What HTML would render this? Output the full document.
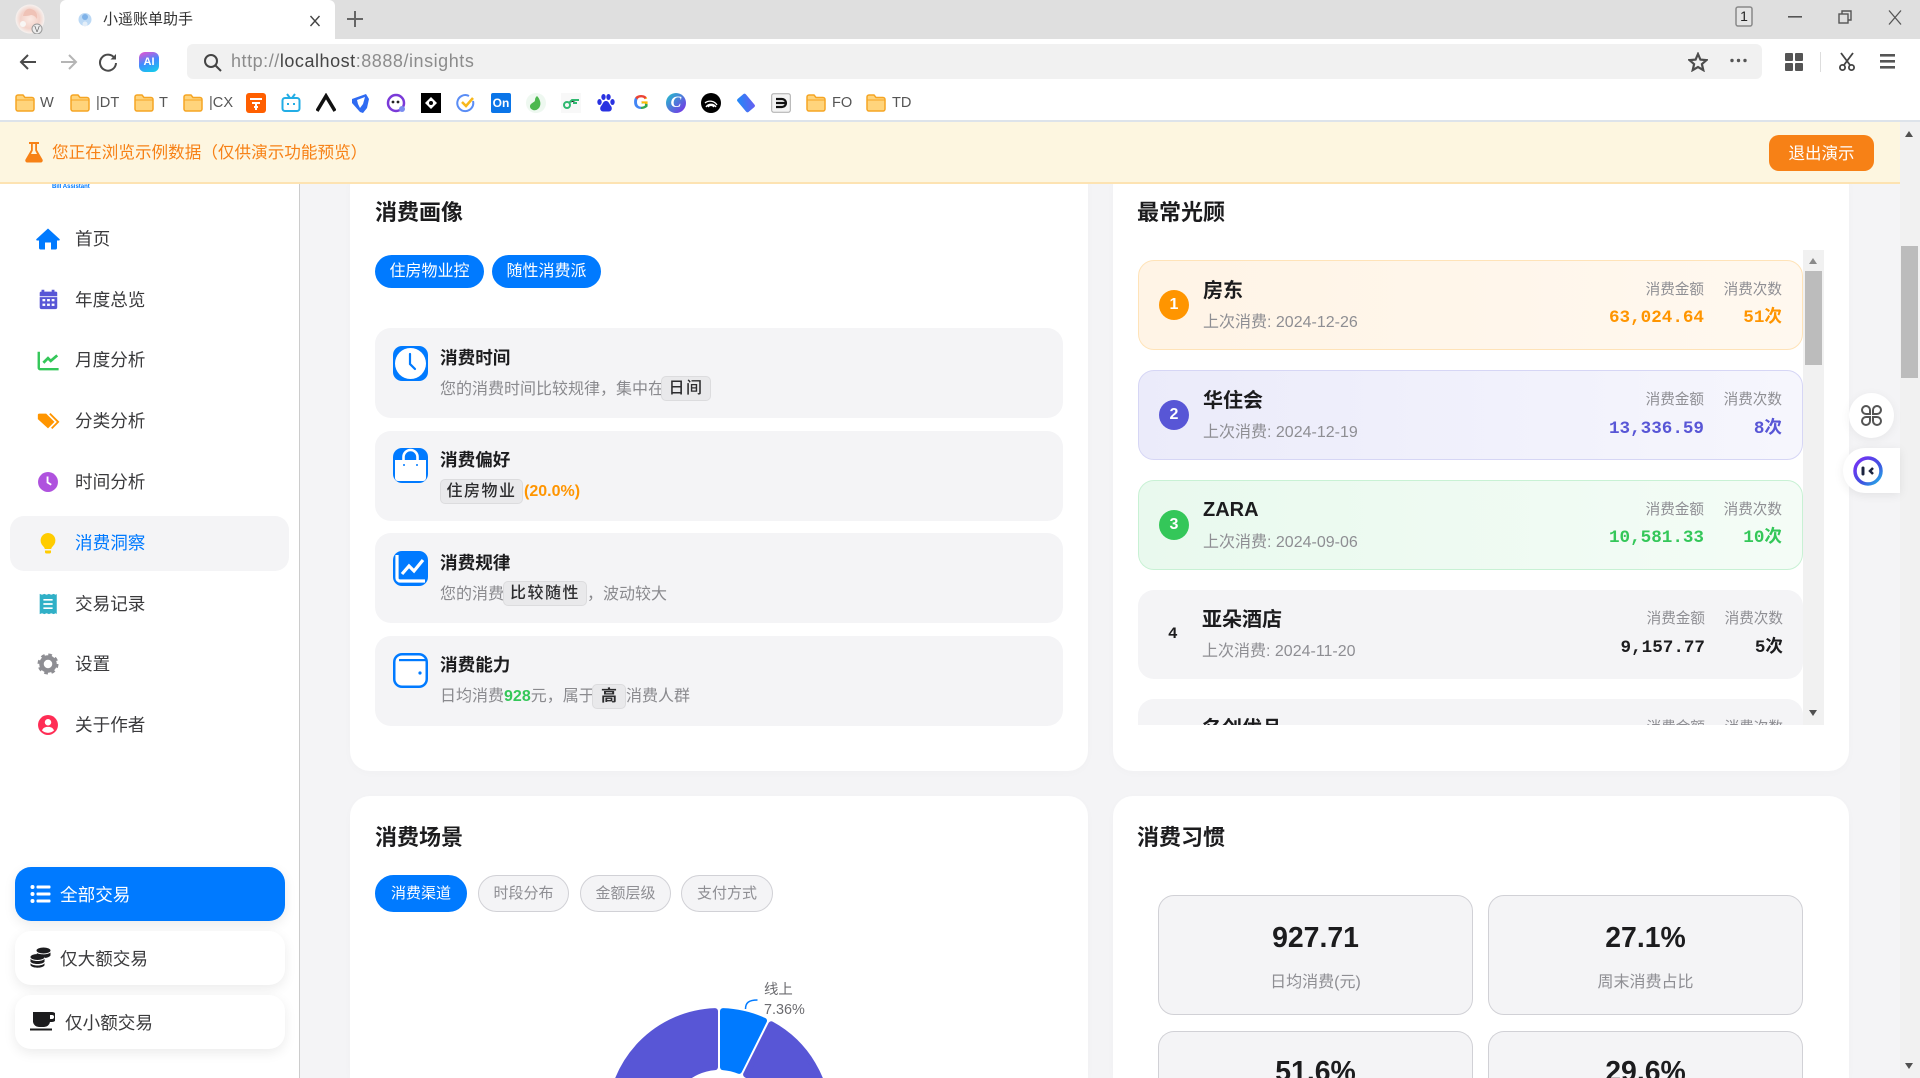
<!DOCTYPE html>
<html lang="zh-CN"><head><meta charset="utf-8"><title>小遥账单助手</title>
<style>
*{box-sizing:border-box;margin:0;padding:0}
html,body{width:1920px;height:1078px;overflow:hidden;background:#f4f4f6}
body{position:relative;font-family:"Liberation Sans","Noto Sans CJK SC",sans-serif;color:#1c1c1e}
.a{position:absolute;white-space:nowrap;line-height:24px}
.card{position:absolute;background:#fff;border-radius:20px;box-shadow:0 2px 10px rgba(0,0,0,.02)}
.h{font-size:22px;font-weight:700;color:#1c1c1e}
.tag{position:absolute;background:#007aff;color:#fff;border-radius:17px;font-size:16px;height:33px;line-height:34px;text-align:center;top:255px;width:109px}
.item{position:absolute;left:375px;width:688px;height:90px;background:#f4f4f6;border-radius:16px}
.ic{position:absolute;left:393px;width:35px;height:35px}
.it{left:440px;font-size:17.6px;font-weight:700}
.d{left:440px;font-size:16px;color:#8a8a8e}
.chip{position:absolute;background:#e9e9eb;border:1px solid #dcdcde;border-radius:5px;color:#2c2c2e;font-size:16px;height:25px;line-height:24px;text-align:center;letter-spacing:1.5px;font-weight:500}
.row{position:absolute;left:1138px;width:665px;border-radius:16px}
.rk{position:absolute;left:1159px;width:30px;height:30px;border-radius:50%;color:#fff;font:700 16px/30px "Liberation Sans",sans-serif;text-align:center}
.nm{left:1203px;font-size:20px;font-weight:700}
.sb{left:1203px;font-size:16px;color:#8e8e93}
.lb{font-size:14.6px;color:#8e8e93;text-align:right;width:70px}
.v{font:700 17.6px/24px "Liberation Mono","Noto Sans CJK SC",monospace;text-align:right;width:120px}
.nv{left:75px;font-size:17.6px;color:#3a3a3c}
.ni{position:absolute;left:35px;width:26px;height:26px}
.bt{position:absolute;left:15px;width:270px;height:54px;border-radius:16px;background:#fff;box-shadow:0 4px 12px rgba(0,0,0,.08)}
.st{position:absolute;height:37px;top:875px;border-radius:18.5px;font-size:15px;line-height:35px;text-align:center;background:#f4f4f6;border:1px solid #d1d1d6;color:#8e8e93}
.hb{position:absolute;width:315px;height:120px;background:#f4f4f6;border:1px solid #d1d1d6;border-radius:16px}
.hbc{height:47px;border-bottom:0;border-radius:16px 16px 0 0}
.hv{font-size:28.4px;font-weight:700;text-align:center;width:315px;line-height:36px}
.hl{font-size:16px;color:#8e8e93;text-align:center;width:315px}
.bm{position:absolute;top:93px;width:20px;height:20px}
.fl{position:absolute;top:93px;width:20px;height:20px}
.bk{font-size:14.6px;color:#555;top:91px}
</style></head><body>

<!-- main cards -->
<div class="card" style="left:350px;top:165px;width:738px;height:606px"></div>
<div class="card" style="left:1113px;top:165px;width:736px;height:606px"></div>
<div class="card" style="left:350px;top:796px;width:738px;height:282px;border-radius:20px 20px 0 0"></div>
<div class="card" style="left:1113px;top:796px;width:736px;height:282px;border-radius:20px 20px 0 0"></div>

<div class="a h" style="left:375px;top:201px">消费画像</div>
<div class="tag" style="left:375px">住房物业控</div>
<div class="tag" style="left:492px">随性消费派</div>

<div class="item" style="top:328px"></div>
<div class="item" style="top:431px"></div>
<div class="item" style="top:533px"></div>
<div class="item" style="top:636px"></div>

<svg class="ic" style="top:346px" viewBox="0 0 35 35"><rect width="35" height="35" rx="9" fill="#007aff"/><circle cx="17.5" cy="17.5" r="15.5" fill="#fff"/><path d="M17 8v10l5 5" fill="none" stroke="#007aff" stroke-width="2.2" stroke-linecap="round"/></svg>
<div class="a it" style="top:346px">消费时间</div>
<div class="a d" style="top:378px">您的消费时间比较规律，集中在</div>
<div class="chip" style="left:661px;top:376px;width:50px">日间</div>

<svg class="ic" style="top:448px" viewBox="0 0 35 35"><rect width="35" height="35" rx="9" fill="#007aff"/><path d="M2 12h31v18a3 3 0 0 1-3 3H5a3 3 0 0 1-3-3z" fill="#fff"/><path d="M10.5 12V9a7 7 0 0 1 14 0v3" fill="none" stroke="#fff" stroke-width="2.6"/><circle cx="11" cy="17" r="1" fill="#007aff"/><circle cx="24" cy="17" r="1" fill="#007aff"/></svg>
<div class="a it" style="top:448px">消费偏好</div>
<div class="chip" style="left:440px;top:479px;width:83px">住房物业</div>
<div class="a" style="left:524px;top:480px;font-size:16px;font-weight:700;color:#ff9500">(20.0%)</div>

<svg class="ic" style="top:551px" viewBox="0 0 35 35"><rect width="35" height="35" rx="9" fill="#007aff"/><path d="M4 4v23a3 3 0 0 0 3 3h25" fill="none" stroke="#fff" stroke-width="3.2"/><path d="M9 23l7-8 5 5 9-11" fill="none" stroke="#fff" stroke-width="3.2"/></svg>
<div class="a it" style="top:551px">消费规律</div>
<div class="a d" style="top:583px">您的消费</div>
<div class="chip" style="left:503px;top:581px;width:84px">比较随性</div>
<div class="a d" style="left:587px;top:583px">，波动较大</div>

<svg class="ic" style="top:653px" viewBox="0 0 35 35"><rect width="35" height="35" rx="9" fill="#007aff"/><rect x="2.500" y="2.500" width="30" height="30" rx="6.500" fill="#fff"/><rect x="6" y="6" width="26.500" height="2.200" fill="#007aff"/><circle cx="27" cy="20" r="1.600" fill="#007aff"/></svg>
<div class="a it" style="top:653px">消费能力</div>
<div class="a d" style="top:685px">日均消费<b style="color:#34c759">928</b>元，属于</div>
<div class="chip" style="left:592px;top:684px;width:34px;letter-spacing:0;font-weight:700">高</div>
<div class="a d" style="left:626px;top:685px">消费人群</div>

<div class="a h" style="left:1137px;top:201px">最常光顾</div>

<div style="position:absolute;left:1803px;top:250px;width:21px;height:475px;background:#f1f1f1"></div>
<div style="position:absolute;left:1805px;top:271px;width:17px;height:94px;background:#bcbcbc"></div>
<div style="position:absolute;left:1809px;top:258px;width:0;height:0;border:4.500px solid transparent;border-top:0;border-bottom:6px solid #8a8a8a"></div>
<div style="position:absolute;left:1809px;top:710px;width:0;height:0;border:4.500px solid transparent;border-bottom:0;border-top:6px solid #505050"></div>

<div style="position:absolute;left:0;top:0;width:1920px;height:1078px;overflow:hidden;clip-path:inset(250px 0 353px 0)">
<div class="row" style="top:260px;height:90px;background:linear-gradient(90deg,#fff4e6,#fff8ef);border:1px solid #ffe3b8"></div>
<div class="rk" style="top:290px;background:#ff9500">1</div>
<div class="a nm" style="top:279px">房东</div><div class="a sb" style="top:311px">上次消费: 2024-12-26</div>
<div class="a lb" style="left:1634px;top:278px">消费金额</div><div class="a lb" style="left:1712px;top:278px">消费次数</div>
<div class="a v" style="left:1584px;top:306px;color:#ff9500">63,024.64</div><div class="a v" style="left:1662px;top:306px;color:#ff9500">51次</div>

<div class="row" style="top:370px;height:90px;background:linear-gradient(90deg,#ebebfa,#f6f6fd);border:1px solid #d6d6f5"></div>
<div class="rk" style="top:400px;background:#5856d6">2</div>
<div class="a nm" style="top:389px">华住会</div><div class="a sb" style="top:421px">上次消费: 2024-12-19</div>
<div class="a lb" style="left:1634px;top:388px">消费金额</div><div class="a lb" style="left:1712px;top:388px">消费次数</div>
<div class="a v" style="left:1584px;top:417px;color:#5856d6">13,336.59</div><div class="a v" style="left:1662px;top:417px;color:#5856d6">8次</div>

<div class="row" style="top:480px;height:90px;background:linear-gradient(90deg,#e9f9ee,#f4fcf6);border:1px solid #c8f1d4"></div>
<div class="rk" style="top:510px;background:#34c759">3</div>
<div class="a nm" style="top:498px">ZARA</div><div class="a sb" style="top:531px">上次消费: 2024-09-06</div>
<div class="a lb" style="left:1634px;top:498px">消费金额</div><div class="a lb" style="left:1712px;top:498px">消费次数</div>
<div class="a v" style="left:1584px;top:526px;color:#34c759">10,581.33</div><div class="a v" style="left:1662px;top:526px;color:#34c759">10次</div>

<div class="row" style="top:590px;height:89px;background:#f4f4f6"></div>
<div class="a" style="left:1168px;top:622px;font:700 16px/24px 'Liberation Mono',monospace">4</div>
<div class="a nm" style="left:1202px;top:608px">亚朵酒店</div><div class="a sb" style="left:1202px;top:640px">上次消费: 2024-11-20</div>
<div class="a lb" style="left:1635px;top:607px">消费金额</div><div class="a lb" style="left:1713px;top:607px">消费次数</div>
<div class="a v" style="left:1585px;top:636px">9,157.77</div><div class="a v" style="left:1663px;top:636px">5次</div>

<div class="row" style="top:699px;height:89px;background:#f4f4f6"></div>
<div class="a nm" style="left:1202px;top:717px">名创优品</div>
<div class="a lb" style="left:1635px;top:716px">消费金额</div><div class="a lb" style="left:1713px;top:716px">消费次数</div>
</div>

<!-- scene -->
<div class="a h" style="left:375px;top:826px">消费场景</div>
<div class="st" style="left:375px;width:92px;background:#007aff;border-color:#007aff;color:#fff">消费渠道</div>
<div class="st" style="left:478px;width:91px">时段分布</div>
<div class="st" style="left:580px;width:91px">金额层级</div>
<div class="st" style="left:681px;width:92px">支付方式</div>
<svg style="position:absolute;left:0;top:0" width="1920" height="1078" viewBox="0 0 1920 1078">
<g stroke-width="6" stroke-linejoin="round">
<path d="M715 1011.100A109 109 0 0 0 610 1120L666 1120A53 53 0 0 1 715 1067.150Z" fill="#5856d6" stroke="#5856d6"/>
<path d="M771.200 1024.300A109 109 0 0 1 828 1120L772 1120A53 53 0 0 0 746.100 1074.500Z" fill="#5856d6" stroke="#5856d6"/>
<path d="M723 1011.100A109 109 0 0 1 764 1020.700L739 1070.900A53 53 0 0 0 723 1067.150Z" fill="#007aff" stroke="#007aff"/>
</g>
<path d="M745.500 1009c0-6 3-9 12-9" fill="none" stroke="#007aff" stroke-width="1.500"/>
</svg>
<div class="a" style="left:764px;top:978px;font-size:14.400px;color:#6c6c70">线上</div>
<div class="a" style="left:764px;top:998px;font-size:14.400px;color:#6c6c70">7.36%</div>

<!-- habits -->
<div class="a h" style="left:1137px;top:826px">消费习惯</div>
<div class="hb" style="left:1158px;top:895px"></div><div class="hb" style="left:1488px;top:895px"></div>
<div class="hb hbc" style="left:1158px;top:1031px"></div><div class="hb hbc" style="left:1488px;top:1031px"></div>
<div class="a hv" style="left:1158px;top:920px">927.71</div><div class="a hl" style="left:1158px;top:971px">日均消费(元)</div>
<div class="a hv" style="left:1488px;top:920px">27.1%</div><div class="a hl" style="left:1488px;top:971px">周末消费占比</div>
<div class="a hv" style="left:1158px;top:1054px;height:24px;overflow:hidden">51.6%</div>
<div class="a hv" style="left:1488px;top:1054px;height:24px;overflow:hidden">29.6%</div>

<!-- sidebar -->
<div style="position:absolute;left:0;top:180px;width:300px;height:898px;background:#fff;border-right:1px solid #ccc"></div>
<div class="a" style="left:52px;top:184px;font-size:6px;line-height:6px;color:#007aff;font-weight:700">Bill Assistant</div>
<div style="position:absolute;left:10px;top:516px;width:279px;height:55px;background:#f4f4f6;border-radius:14px"></div>

<svg class="ni" style="top:226px" viewBox="0 0 26 26"><path d="M13 2.500L1.500 13c-.6.700-.2 1.500.6 1.500H4v7.500c0 1 .8 1.500 1.500 1.500H10v-7h6v7h4.500c.8 0 1.500-.5 1.500-1.500v-7.500h1.900c.8 0 1.200-.8.600-1.500z" fill="#007aff"/></svg>
<div class="a nv" style="top:227px">首页</div>
<svg class="ni" style="top:287px;width:24px;height:24px;left:36px" viewBox="0 0 26 26"><path d="M6 3h3v2h8V3h3v2h1.500A1.500 1.500 0 0 1 23 6.500V10H4V6.500A1.500 1.500 0 0 1 5.500 5H6zM4 11h19v11a2 2 0 0 1-2 2H6a2 2 0 0 1-2-2z" fill="#5856d6"/><g fill="#fff"><rect x="7" y="13" width="3" height="2.500"/><rect x="12" y="13" width="3" height="2.500"/><rect x="17" y="13" width="3" height="2.500"/><rect x="7" y="18" width="3" height="2.500"/><rect x="12" y="18" width="3" height="2.500"/><rect x="17" y="18" width="3" height="2.500"/></g></svg>
<div class="a nv" style="top:288px">年度总览</div>
<svg class="ni" style="top:348px;width:24px;height:24px;left:36px" viewBox="0 0 26 26"><path d="M3 4v17.500a1.500 1.500 0 0 0 1.500 1.500h20" fill="none" stroke="#34c759" stroke-width="2.600"/><path d="M8 16l5-5 3 3 7-6" fill="none" stroke="#34c759" stroke-width="3"/></svg>
<div class="a nv" style="top:348px">月度分析</div>
<svg class="ni" style="top:409px;width:24px;height:24px;left:36px" viewBox="0 0 26 26"><path d="M2 6.500A1.500 1.500 0 0 1 3.500 5H11l9 9-7 7L2 11z" fill="#ff9500"/><path d="M15 5l9 9-7 7" fill="none" stroke="#ff9500" stroke-width="2"/></svg>
<div class="a nv" style="top:409px">分类分析</div>
<svg class="ni" style="top:470px;width:24px;height:24px;left:36px" viewBox="0 0 26 26"><circle cx="13" cy="13" r="10.800" fill="#af52de"/><path d="M12.500 7v6.500l4 2.500" fill="none" stroke="#fff" stroke-width="2"/></svg>
<div class="a nv" style="top:470px">时间分析</div>
<svg class="ni" style="top:530px" viewBox="0 0 26 26"><path d="M13 3a7.500 7.500 0 0 0-4.800 13.200c1 1 1.400 1.800 1.600 2.800h6.400c.2-1 .6-1.800 1.600-2.800A7.500 7.500 0 0 0 13 3z" fill="#ffcc00"/><path d="M10 20.500h6v1.500a1.500 1.500 0 0 1-1.500 1.500h-3A1.500 1.500 0 0 1 10 22z" fill="#ffcc00"/></svg>
<div class="a nv" style="top:531px;color:#007aff">消费洞察</div>
<svg class="ni" style="top:592px;width:24px;height:24px;left:36px" viewBox="0 0 26 26"><path d="M4 2l2.500 1 2.500-1 2.500 1 2.500-1 2.500 1 2.500-1 2.500 1 1-1v22l-1-1-2.500 1-2.500-1-2.500 1-2.500-1-2.500 1-2.500-1L4 24z" fill="#30b0c7"/><path d="M8 8.500h10M8 13h10M8 17.500h10" stroke="#fff" stroke-width="1.800"/></svg>
<div class="a nv" style="top:592px">交易记录</div>
<svg class="ni" style="top:651px" viewBox="0 0 26 26" fill="none"><circle cx="13" cy="13" r="6.500" stroke="#8e8e93" stroke-width="4.500"/><circle cx="13" cy="13" r="8.800" stroke="#8e8e93" stroke-width="3.400" stroke-dasharray="3.500 3.410"/></svg>
<div class="a nv" style="top:652px">设置</div>
<svg class="ni" style="top:713px;width:24px;height:24px;left:36px" viewBox="0 0 26 26"><circle cx="13" cy="13" r="10.800" fill="#ff2d55"/><circle cx="13" cy="10" r="3.500" fill="#fff"/><path d="M6.500 19c1-3 3.500-4 6.500-4s5.500 1 6.500 4c-2 1.700-4 2.500-6.500 2.500s-4.500-.8-6.500-2.500z" fill="#fff"/></svg>
<div class="a nv" style="top:713px">关于作者</div>

<div class="bt" style="top:867px;background:#007aff"></div>
<div class="bt" style="top:931px"></div>
<div class="bt" style="top:995px"></div>
<svg style="position:absolute;left:30px;top:884px" width="22" height="20" viewBox="0 0 22 20" fill="#fff"><circle cx="2.500" cy="3" r="2"/><circle cx="2.500" cy="10" r="2"/><circle cx="2.500" cy="17" r="2"/><rect x="6.500" y="1.500" width="14" height="3" rx="1"/><rect x="6.500" y="8.500" width="14" height="3" rx="1"/><rect x="6.500" y="15.500" width="14" height="3" rx="1"/></svg>
<div class="a" style="left:60px;top:883px;font-size:17.600px;color:#fff">全部交易</div>
<svg style="position:absolute;left:30px;top:947px" width="21" height="21" viewBox="0 0 21 21" fill="#1c1c1e"><ellipse cx="13.500" cy="3.500" rx="7" ry="3"/><path d="M6.800 6c1.500 1.200 10 2.500 13.700-.5v3c-1 1.600-3.500 2.300-5.500 2.400-1-2-4-3.400-8-3.400z"/><ellipse cx="7.500" cy="10" rx="7" ry="3"/><path d="M.5 11.800c2 3 12 3 14 0v3c-2 3-12 3-14 0z"/><path d="M.5 16.300c2 3 12 3 14 0v2c-2 3.300-12 3.300-14 0z"/></svg>
<div class="a" style="left:60px;top:947px;font-size:17.600px;color:#3a3a3c">仅大额交易</div>
<svg style="position:absolute;left:30px;top:1012px" width="25" height="19" viewBox="0 0 25 19" fill="#1c1c1e"><path d="M3 0h19a3 3 0 0 1 0 10h-2a6 6 0 0 1-6 5H9a6 6 0 0 1-6-5zM20 3v4h2a2 2 0 0 0 0-4z"/><rect x="0" y="16.500" width="22" height="2"/></svg>
<div class="a" style="left:65px;top:1011px;font-size:17.600px;color:#3a3a3c">仅小额交易</div>

<!-- page scrollbar -->
<div style="position:absolute;left:1900px;top:122px;width:20px;height:956px;background:#f1f1f1"></div>
<div style="position:absolute;left:1901px;top:246px;width:17px;height:132px;background:#bcbcbc"></div>
<div style="position:absolute;left:1905px;top:131px;width:0;height:0;border:4.500px solid transparent;border-top:0;border-bottom:6px solid #505050"></div>
<div style="position:absolute;left:1905px;top:1063px;width:0;height:0;border:4.500px solid transparent;border-bottom:0;border-top:6px solid #505050"></div>

<!-- floats -->
<div style="position:absolute;left:1849px;top:393px;width:45px;height:45px;border-radius:50%;background:#fff;box-shadow:0 2px 10px rgba(0,0,0,.06)"></div>
<svg style="position:absolute;left:1860px;top:404px" width="23" height="23" viewBox="0 0 23 23" fill="none" stroke="#555" stroke-width="2"><path d="M10 10H6a4 4 0 1 1 4-4zM13 10h4a4 4 0 1 0-4-4zM10 13H6a4 4 0 1 0 4 4zM13 13h4a4 4 0 1 1-4 4z"/></svg>
<div style="position:absolute;left:1843px;top:448px;width:57px;height:45px;border-radius:22px 0 0 22px;background:#fff;box-shadow:0 2px 10px rgba(0,0,0,.08)"></div>
<svg style="position:absolute;left:1853px;top:456px" width="30" height="30" viewBox="0 0 30 30"><defs><linearGradient id="rg" x1="0" y1="0" x2="1" y2="1"><stop offset="0" stop-color="#7b2ff7"/><stop offset=".6" stop-color="#3f51e0"/><stop offset="1" stop-color="#22b8e8"/></linearGradient></defs><circle cx="15" cy="15" r="13" fill="#fff" stroke="url(#rg)" stroke-width="3.500"/><path d="M10 12v6" stroke="#1c2440" stroke-width="3" stroke-linecap="round"/><path d="M20 12l-3 3 3 3" fill="none" stroke="#1c2440" stroke-width="2.500"/></svg>

<!-- banner -->
<div style="position:absolute;left:0;top:122px;width:1900px;height:62px;background:#fdf6e0;border-bottom:2px solid #fde3b2"></div>
<svg style="position:absolute;left:25px;top:141px" width="18" height="22" viewBox="0 0 18 22"><path d="M4 1h10v2h-2v6l5.500 9.500c.7 1.300-.2 3-1.700 3H2.200c-1.500 0-2.400-1.700-1.700-3L6 9V3H4z" fill="#f78116"/><path d="M7.800 3v6.500L6 13h6l-1.800-3.500V3z" fill="#fdf6e0"/></svg>
<div class="a" style="left:52px;top:141px;font-size:16.600px;color:#f78116">您正在浏览示例数据（仅供演示功能预览）</div>
<div class="a" style="left:1769px;top:135px;width:105px;height:36px;background:#f78116;border-radius:10px;color:#fff;font-size:16.500px;line-height:38px;text-align:center">退出演示</div>

<!-- browser chrome -->
<div style="position:absolute;left:0;top:0;width:1920px;height:122px;background:#fff;border-bottom:2px solid #dde3ea"></div>
<div style="position:absolute;left:0;top:0;width:1920px;height:39px;background:#dfdfdf"></div>
<div style="position:absolute;left:60px;top:0;width:275px;height:39px;background:#fff;border-radius:6px 6px 0 0"></div>
<svg style="position:absolute;left:15px;top:4px" width="30" height="30" viewBox="0 0 30 30"><defs><radialGradient id="av" cx=".5" cy=".5"><stop offset="0" stop-color="#fbeae4"/><stop offset=".65" stop-color="#f3d3ca"/><stop offset="1" stop-color="#f6f2f0"/></radialGradient></defs><circle cx="15" cy="15" r="14.500" fill="url(#av)"/><path d="M8 12c1-5 4-8 8-7 4 1 7 4 6 10-2-3-4-4-6-4-3 1-5 1-8 1z" fill="#efc2b6"/><circle cx="8" cy="20" r="3" fill="#f8f6f4"/><circle cx="22" cy="25" r="5" fill="#ececec" stroke="#999"/><text x="22" y="28" font-size="8" text-anchor="middle" fill="#666" font-family="Liberation Sans">V</text></svg>
<svg style="position:absolute;left:77px;top:11px" width="16" height="17" viewBox="0 0 16 17"><circle cx="8" cy="8.500" r="6.500" fill="#bcd9f5"/><circle cx="8" cy="6" r="3" fill="#7fb2e8"/><circle cx="8" cy="13" r="2.500" fill="#e4eef8"/></svg>
<div class="a" style="left:103px;top:8px;font-size:15px;color:#333">小遥账单助手</div>
<svg style="position:absolute;left:309px;top:15px" width="12" height="12" viewBox="0 0 12 12"><path d="M1.500 1l9 10M10.500 1l-9 10" stroke="#444" stroke-width="1.400"/></svg>
<svg style="position:absolute;left:347px;top:11px" width="16" height="16" viewBox="0 0 16 16"><path d="M8 0v16M0 8h16" stroke="#666" stroke-width="2"/></svg>

<svg style="position:absolute;left:1735px;top:6px" width="18" height="21" viewBox="0 0 18 21"><rect x="1" y="1" width="16" height="19" rx="2" fill="#e4e4e4" stroke="#888" stroke-width="1.500"/></svg>
<div class="a" style="left:1735px;top:4px;width:18px;text-align:center;font-size:14px;color:#222">1</div>
<svg style="position:absolute;left:1788px;top:16px" width="14" height="2"><rect width="14" height="1.600" fill="#555"/></svg>
<svg style="position:absolute;left:1838px;top:10px" width="14" height="14" viewBox="0 0 14 14" fill="none" stroke="#555" stroke-width="1.400"><rect x="1" y="4" width="9" height="9"/><path d="M4 4V1h9v9h-3"/></svg>
<svg style="position:absolute;left:1888px;top:10px" width="14" height="15" viewBox="0 0 14 15"><path d="M1 .5l12 14M13 .5l-12 14" stroke="#555" stroke-width="1.300"/></svg>

<svg style="position:absolute;left:18px;top:52px" width="20" height="20" viewBox="0 0 20 20" fill="none" stroke="#4a4a4a" stroke-width="2"><path d="M18 10H3M10 3l-7 7 7 7"/></svg>
<svg style="position:absolute;left:59px;top:52px" width="20" height="20" viewBox="0 0 20 20" fill="none" stroke="#b5b5b5" stroke-width="2"><path d="M2 10h15M10 3l7 7-7 7"/></svg>
<svg style="position:absolute;left:98px;top:52px" width="20" height="20" viewBox="0 0 20 20" fill="none" stroke="#4a4a4a" stroke-width="2"><path d="M16.500 6A8 8 0 1 0 18 11"/><path d="M18 2v5.500h-5.500z" fill="#4a4a4a" stroke="none"/></svg>
<div style="position:absolute;left:139px;top:52px;width:20px;height:20px;border-radius:6px;background:linear-gradient(160deg,#f04fd0,#3f8cff 50%,#10d4e8);color:#fff;font:700 11px/20px 'Liberation Sans',sans-serif;text-align:center">AI</div>
<div style="position:absolute;left:187px;top:44px;width:1575px;height:35px;background:#f1f1f1;border-radius:6px"></div>
<svg style="position:absolute;left:203px;top:53px" width="19" height="19" viewBox="0 0 19 19" fill="none" stroke="#444" stroke-width="2"><circle cx="8" cy="8" r="6"/><path d="M12.500 12.500L18 18"/></svg>
<div class="a" style="left:231px;top:49px;font-size:18px;color:#8c8c8c;letter-spacing:.03em">http://<span style="color:#444">localhost</span>:8888/insights</div>
<svg style="position:absolute;left:1688px;top:52px" width="20" height="20" viewBox="0 0 20 20"><path d="M10 2l2.400 5.600 6.100.5-4.600 4 1.400 6L10 15l-5.300 3.100 1.400-6-4.600-4 6.100-.5z" fill="none" stroke="#4d4d4d" stroke-width="2.200"/></svg>
<svg style="position:absolute;left:1730px;top:58px" width="17" height="5" fill="#555"><circle cx="2" cy="2.500" r="1.700"/><circle cx="8.500" cy="2.500" r="1.700"/><circle cx="15" cy="2.500" r="1.700"/></svg>
<svg style="position:absolute;left:1785px;top:53px" width="18" height="18" fill="#555"><rect width="8" height="8" rx="1"/><rect x="10" width="8" height="8" rx="1"/><rect y="10" width="8" height="8" rx="1"/><rect x="10" y="10" width="8" height="8" rx="1"/></svg>
<div style="position:absolute;left:1820px;top:52px;width:1px;height:20px;background:#ddd"></div>
<svg style="position:absolute;left:1838px;top:52px" width="18" height="19" viewBox="0 0 18 19" fill="none" stroke="#444" stroke-width="1.800"><path d="M3 1l9 12M15 1L6 13"/><circle cx="4.500" cy="15.500" r="2.600"/><circle cx="13.500" cy="15.500" r="2.600"/></svg>
<svg style="position:absolute;left:1880px;top:54px" width="15" height="15" fill="#555"><rect width="15" height="2.600"/><rect y="6" width="15" height="2.600"/><rect y="12" width="15" height="2.600"/></svg>

<!-- bookmarks -->
<svg width="0" height="0" style="position:absolute"><defs><g id="fd"><path d="M1 4a2 2 0 0 1 2-2h5l2 2.500h7a2 2 0 0 1 2 2V16a2 2 0 0 1-2 2H3a2 2 0 0 1-2-2z" fill="#ffd47c" stroke="#f5a524" stroke-width="1.500"/><path d="M1 7h18" stroke="#f5a524" stroke-width="1"/></g></defs></svg>
<svg class="fl" style="left:15px" viewBox="0 0 20 20"><use href="#fd"/></svg><div class="a bk" style="left:40px">W</div>
<svg class="fl" style="left:70px" viewBox="0 0 20 20"><use href="#fd"/></svg><div class="a bk" style="left:96px">|DT</div>
<svg class="fl" style="left:134px" viewBox="0 0 20 20"><use href="#fd"/></svg><div class="a bk" style="left:159px">T</div>
<svg class="fl" style="left:183px" viewBox="0 0 20 20"><use href="#fd"/></svg><div class="a bk" style="left:209px">|CX</div>
<svg class="fl" style="left:806px" viewBox="0 0 20 20"><use href="#fd"/></svg><div class="a bk" style="left:832px">FO</div>
<svg class="fl" style="left:866px" viewBox="0 0 20 20"><use href="#fd"/></svg><div class="a bk" style="left:892px">TD</div>

<svg class="bm" style="left:246px" viewBox="0 0 20 20"><rect width="20" height="20" rx="3" fill="#ff5f00"/><path d="M4 6h12M6 10h8M8 14h4M10 10v7" stroke="#fff" stroke-width="2"/></svg>
<svg class="bm" style="left:281px" viewBox="0 0 20 20" fill="none" stroke="#23ade5" stroke-width="2"><rect x="1.500" y="5" width="17" height="13" rx="2.500"/><path d="M6 1l3 4M14 1l-3 4M7 10v2M13 10v2"/></svg>
<svg class="bm" style="left:316px" viewBox="0 0 20 20"><path d="M1 18L10 3l9 15" fill="none" stroke="#111" stroke-width="3.500"/></svg>
<svg class="bm" style="left:351px" viewBox="0 0 20 20"><path d="M1 6l14-5 3 5-2 9-4 5-3-1-8-9z" fill="#2f6bf2"/><path d="M6 7l8-3-2 7-3 4-2-4z" fill="#fff"/></svg>
<svg class="bm" style="left:386px" viewBox="0 0 20 20"><circle cx="10" cy="10" r="8" fill="#fff" stroke="#7a3ad8" stroke-width="2.500"/><circle cx="7" cy="9" r="1.400" fill="#222"/><circle cx="12" cy="9" r="1.400" fill="#222"/><circle cx="16" cy="16" r="3" fill="#7a8cf0"/></svg>
<svg class="bm" style="left:421px" viewBox="0 0 20 20"><rect width="20" height="20" fill="#000"/><path d="M10 4l6 6-6 6-6-6z" fill="#fff"/><circle cx="10" cy="10" r="2" fill="#000"/></svg>
<svg class="bm" style="left:456px" viewBox="0 0 20 20" fill="none"><path d="M17 8a8 8 0 1 1-4-5" stroke="#5a8df5" stroke-width="2"/><path d="M6 9l4 4 7-8" stroke="#f8b81c" stroke-width="2.500"/></svg>
<div class="bm" style="left:491px;background:#0a75e8;border-radius:2px;color:#fff;font:700 12px/20px 'Liberation Sans',sans-serif;text-align:center">On</div>
<svg class="bm" style="left:526px" viewBox="0 0 20 20"><circle cx="10" cy="10" r="10" fill="#eef8f0"/><path d="M11 3c3 3 4 7 3 10s-4 5-7 4-4-4-2-6 4-2 4-4 1-3 2-4z" fill="#4cb84f"/></svg>
<svg class="bm" style="left:561px" viewBox="0 0 20 20"><rect width="20" height="20" fill="#f8f8f8"/><circle cx="6" cy="12" r="3" fill="none" stroke="#30b870" stroke-width="2"/><path d="M8 10l3-3h7M12 10h4" stroke="#30b870" stroke-width="2"/></svg>
<svg class="bm" style="left:596px" viewBox="0 0 20 20" fill="#2932e1"><ellipse cx="3.500" cy="9" rx="2.200" ry="3"/><ellipse cx="7.500" cy="4" rx="2.200" ry="3"/><ellipse cx="12.500" cy="4" rx="2.200" ry="3"/><ellipse cx="16.500" cy="9" rx="2.200" ry="3"/><path d="M10 8c-3 0-3 3-5 5-2 3 0 6 3 5.500h4c3 .5 5-2.500 3-5.500-2-2-2-5-5-5z"/></svg>
<div class="bm" style="left:631px;font:700 20px/20px 'Liberation Sans',sans-serif;text-align:center;background:conic-gradient(from 315deg,#ea4335 0 25%,#fbbc05 25% 40%,#34a853 40% 62%,#4285f4 62% 100%);-webkit-background-clip:text;background-clip:text;color:transparent">G</div>
<div class="bm" style="left:666px;border-radius:50%;background:linear-gradient(135deg,#20c4cb,#7d2ae8);color:#fff;font:italic 700 16px/20px 'Liberation Serif',serif;text-align:center">C</div>
<svg class="bm" style="left:701px" viewBox="0 0 20 20" fill="none"><circle cx="10" cy="10" r="10" fill="#000"/><path d="M5 14a6 6 0 0 1 10 0M7 14a3.500 3.500 0 0 1 6 0M4 10a8 8 0 0 1 12 2" stroke="#fff" stroke-width="1.300"/></svg>
<svg class="bm" style="left:736px" viewBox="0 0 20 20"><defs><linearGradient id="dm" x1="0" y1="0" x2="1" y2="1"><stop offset="0" stop-color="#1d8cf8"/><stop offset="1" stop-color="#6a5cf0"/></linearGradient></defs><rect x="4.500" y="1.500" width="11" height="17" rx="2" transform="rotate(-40 10 10)" fill="url(#dm)"/></svg>
<svg class="bm" style="left:771px" viewBox="0 0 20 20"><rect x=".7" y=".7" width="18.600" height="18.600" rx="2" fill="#f4f4f4" stroke="#aaa"/><path d="M5 6h6a4 4 0 0 1 0 8H5M5 10h9" fill="none" stroke="#111" stroke-width="2.200"/></svg>

</body></html>
